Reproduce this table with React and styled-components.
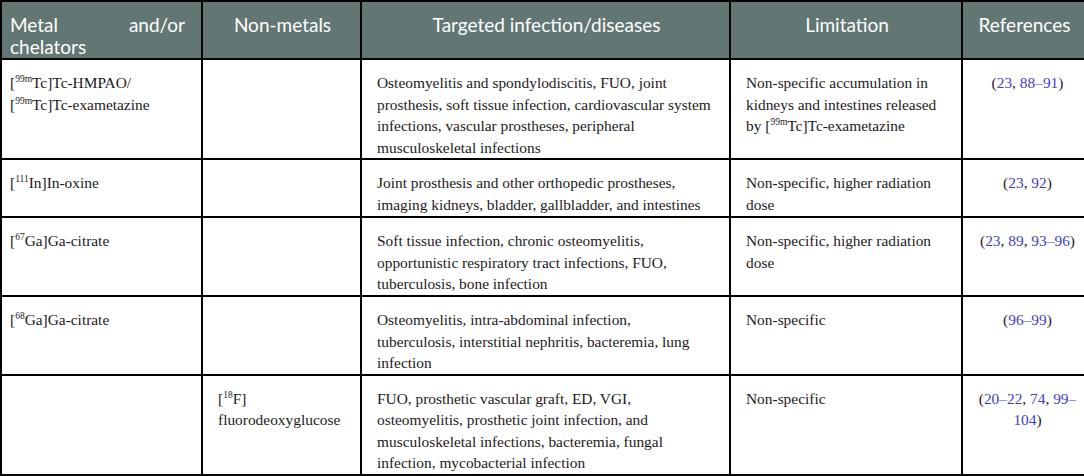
import React from "react";
import styled, { createGlobalStyle } from "styled-components";

const Global = createGlobalStyle`
  html, body { margin: 0; padding: 0; background: #fff; }
  body { font-family: "Liberation Serif", "Times New Roman", serif; }
`;

const Table = styled.table`
  width: 1084px;
  table-layout: fixed;
  border-collapse: collapse;
  border: 2px solid #000;
`;

const HeadRow = styled.tr`
  height: 58px;
`;

const HeadCell = styled.th`
  background: #627674;
  color: #fff;
  font-family: Lato, "Open Sans", sans-serif;
  font-weight: 400;
  font-size: 19px;
  line-height: 22px;
  vertical-align: top;
  border: 2px solid #000;
  padding: ${(p) => (p.$justify ? "12px 16px 0 8px" : "12px 6px 0 8px")};
  text-align: ${(p) => (p.$justify ? "justify" : "center")};
`;

const Row = styled.tr`
  height: ${(p) => p.$h}px;
`;

const Cell = styled.td`
  border: 2px solid #000;
  vertical-align: top;
  font-size: 15.4px;
  line-height: 21.5px;
  color: #1c1a1b;
  padding: 12px ${(p) => (p.$ref ? "4px" : "0")} 0
    ${(p) => (p.$first ? "8px" : p.$ref ? "12px" : "15px")};
  text-align: ${(p) => (p.$ref ? "center" : "left")};
`;

const Line = styled.span`
  display: block;
  white-space: nowrap;
`;

const Sup = styled.sup`
  font-size: 9.5px;
  line-height: 0;
  vertical-align: 0;
  position: relative;
  top: -6px;
`;

const Ref = styled.span`
  color: #3e3ec4;
`;

const iso = (n, rest) => (
  <>
    [<Sup>{n}</Sup>
    {rest}
  </>
);

const refs = (items) =>
  items.map((r, i) => (
    <React.Fragment key={i}>
      {i > 0 && ", "}
      <Ref>{r}</Ref>
    </React.Fragment>
  ));

const lines = (arr) => arr.map((l, i) => <Line key={i}>{l}</Line>);

const rows = [
  {
    h: 100,
    metal: [iso("99m", "Tc]Tc-HMPAO/"), iso("99m", "Tc]Tc-exametazine")],
    non: [],
    target: [
      "Osteomyelitis and spondylodiscitis, FUO, joint",
      "prosthesis, soft tissue infection, cardiovascular system",
      "infections, vascular prostheses, peripheral",
      "musculoskeletal infections",
    ],
    limit: [
      "Non-specific accumulation in",
      "kidneys and intestines released",
      <>by {iso("99m", "Tc]Tc-exametazine")}</>,
    ],
    refs: [<>({refs(["23", "88–91"])})</>],
  },
  {
    h: 58,
    metal: [iso("111", "In]In-oxine")],
    non: [],
    target: [
      "Joint prosthesis and other orthopedic prostheses,",
      "imaging kidneys, bladder, gallbladder, and intestines",
    ],
    limit: ["Non-specific, higher radiation", "dose"],
    refs: [<>({refs(["23", "92"])})</>],
  },
  {
    h: 79,
    metal: [iso("67", "Ga]Ga-citrate")],
    non: [],
    target: [
      "Soft tissue infection, chronic osteomyelitis,",
      "opportunistic respiratory tract infections, FUO,",
      "tuberculosis, bone infection",
    ],
    limit: ["Non-specific, higher radiation", "dose"],
    refs: [<>({refs(["23", "89", "93–96"])})</>],
  },
  {
    h: 78,
    metal: [iso("68", "Ga]Ga-citrate")],
    non: [],
    target: [
      "Osteomyelitis, intra-abdominal infection,",
      "tuberculosis, interstitial nephritis, bacteremia, lung",
      "infection",
    ],
    limit: ["Non-specific"],
    refs: [<>({refs(["96–99"])})</>],
  },
  {
    h: 99,
    metal: [],
    non: [iso("18", "F]"), "fluorodeoxyglucose"],
    target: [
      "FUO, prosthetic vascular graft, ED, VGI,",
      "osteomyelitis, prosthetic joint infection, and",
      "musculoskeletal infections, bacteremia, fungal",
      "infection, mycobacterial infection",
    ],
    limit: ["Non-specific"],
    refs: [
      <>({refs(["20–22", "74", "99–"])}</>,
      <><Ref>104</Ref>)</>,
    ],
  },
];

export default function App() {
  return (
    <>
      <Global />
      <Table>
        <colgroup>
          <col style={{ width: 201 }} />
          <col style={{ width: 159 }} />
          <col style={{ width: 369 }} />
          <col style={{ width: 232 }} />
          <col style={{ width: 123 }} />
        </colgroup>
        <thead>
          <HeadRow>
            <HeadCell $justify>Metal and/or chelators</HeadCell>
            <HeadCell>Non-metals</HeadCell>
            <HeadCell>Targeted infection/diseases</HeadCell>
            <HeadCell>Limitation</HeadCell>
            <HeadCell>References</HeadCell>
          </HeadRow>
        </thead>
        <tbody>
          {rows.map((r, i) => (
            <Row key={i} $h={r.h}>
              <Cell $first>{lines(r.metal)}</Cell>
              <Cell>{lines(r.non)}</Cell>
              <Cell>{lines(r.target)}</Cell>
              <Cell>{lines(r.limit)}</Cell>
              <Cell $ref>{lines(r.refs)}</Cell>
            </Row>
          ))}
        </tbody>
      </Table>
    </>
  );
}
